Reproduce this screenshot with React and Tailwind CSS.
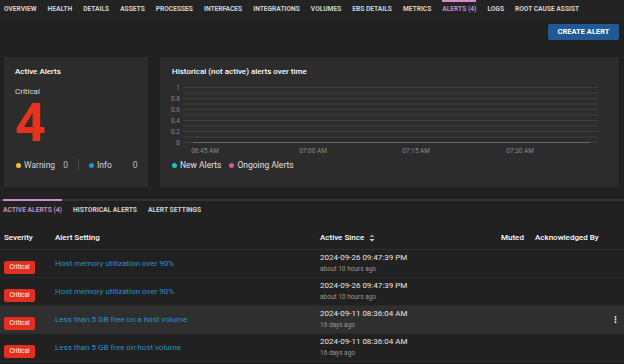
import { MoreVertical } from 'lucide-react';

const navTabs = [
  'OVERVIEW', 'HEALTH', 'DETAILS', 'ASSETS', 'PROCESSES', 'INTERFACES', 'INTEGRATIONS',
  'VOLUMES', 'EBS DETAILS', 'METRICS', 'ALERTS (4)', 'LOGS', 'ROOT CAUSE ASSIST',
];

const alerts = [
  { setting: 'Host memory utilization over 90%', since: '2024-09-26 09:47:39 PM', ago: 'about 10 hours ago' },
  { setting: 'Host memory utilization over 90%', since: '2024-09-26 09:47:39 PM', ago: 'about 10 hours ago' },
  { setting: 'Less than 5 GB free on a host volume', since: '2024-09-11 08:36:04 AM', ago: '16 days ago', hover: true },
  { setting: 'Less than 5 GB free on host volume', since: '2024-09-11 08:36:04 AM', ago: '16 days ago' },
];

function AlertsChart() {
  const lines = Array.from({ length: 11 }, (_, i) => 5.5 + i * 5.5);
  const yLabels = ['1', '0.8', '0.6', '0.4', '0.2', '0'];
  const xLabels = [
    { x: 39, t: '06:45 AM' },
    { x: 147, t: '07:00 AM' },
    { x: 250, t: '07:15 AM' },
    { x: 354, t: '07:30 AM' },
  ];
  return (
    <svg width="440" height="76" className="block">
      {lines.map((y, i) => (
        <line key={i} x1="17" x2="432" y1={y} y2={y} stroke="#3f3f3f" strokeWidth="1" />
      ))}
      <line x1="27" x2="424" y1="60.5" y2="60.5" stroke="#6a6a6a" strokeWidth="1" />
      {yLabels.map((t, i) => (
        <text key={t} x="14" y={i * 11 + 8} fontSize="6.5" fill="#8a8a8a" textAnchor="end">{t}</text>
      ))}
      {xLabels.map((l) => (
        <text key={l.t} x={l.x} y="71" fontSize="6.5" fill="#8a8a8a" textAnchor="middle">{l.t}</text>
      ))}
    </svg>
  );
}

export default function App() {
  return (
    <div className="w-[624px] h-[364px] overflow-hidden bg-[#212121] text-[#e6e6e6] font-['Roboto','Liberation_Sans',sans-serif]">
      {/* Top tabs */}
      <div className="flex h-[18px] px-[4px] gap-[11px] bg-[#232323]">
        {navTabs.map((t) => {
          const active = t === 'ALERTS (4)';
          return (
            <div
              key={t}
              className={`flex items-center border-t-2 text-[6.65px] font-bold whitespace-nowrap ${
                active ? 'border-[#d38ccb] text-[#c48bbf]' : 'border-transparent text-[#d2d2d2]'
              }`}
            >
              {t}
            </div>
          );
        })}
      </div>

      {/* Create button */}
      <div className="flex justify-end pr-[5px] pt-[6px]">
        <button className="h-[16px] w-[71px] rounded-[2px] bg-[#1f5a97] text-[7.5px] font-bold text-white">
          CREATE ALERT
        </button>
      </div>

      {/* Cards */}
      <div className="flex gap-[12px] pl-[4px] pr-[5px] mt-[17px] h-[130px]">
        <div className="w-[144px] bg-[#2c2c2c] pl-[11px] pt-[10px] flex flex-col">
          <div className="text-[8px] font-medium text-white leading-[10px]">Active Alerts</div>
          <div className="text-[8px] text-[#dcdcdc] mt-[10px] leading-[10px]">Critical</div>
          <div className="text-[54px] font-bold text-[#e8321e] leading-[42px] mt-[5px]">4</div>
          <div className="flex items-center mt-[15px] text-[8.5px] text-[#d6d6d6]">
            <span className="w-[5px] h-[5px] rounded-full bg-[#f5c02c] ml-[1px]" />
            <span className="ml-[3px]">Warning</span>
            <span className="ml-[8px] text-[#bdbdbd]">0</span>
            <span className="w-px h-[12px] bg-[#444] ml-[10px]" />
            <span className="w-[5px] h-[5px] rounded-full bg-[#1f95d6] ml-[10px]" />
            <span className="ml-[3px]">Info</span>
            <span className="ml-[21px] text-[#bdbdbd]">0</span>
          </div>
        </div>
        <div className="flex-1 bg-[#2c2c2c] pl-[12px] pt-[10px] flex flex-col">
          <div className="text-[8px] font-medium text-white leading-[10px]">Historical (not active) alerts over time</div>
          <div className="-ml-[6px] mt-[5px]">
            <AlertsChart />
          </div>
          <div className="flex items-center text-[8.5px] text-[#e0e0e0] mt-[1px]">
            <span className="w-[5px] h-[5px] rounded-full bg-[#19c3c0]" />
            <span className="ml-[3px]">New Alerts</span>
            <span className="w-[5px] h-[5px] rounded-full bg-[#cf5b93] ml-[8px]" />
            <span className="ml-[3px]">Ongoing Alerts</span>
          </div>
        </div>
      </div>

      {/* Sub tabs */}
      <div className="mt-[12px] border-t-2 border-[#333] flex px-[3px] gap-[11px] h-[20px]">
        {['ACTIVE ALERTS (4)', 'HISTORICAL ALERTS', 'ALERT SETTINGS'].map((t, i) => (
          <div
            key={t}
            className={`-mt-[2px] flex items-center border-t-2 text-[6.7px] font-bold whitespace-nowrap ${
              i === 0 ? 'border-[#d38ccb] text-[#c48bbf]' : 'border-transparent text-[#d2d2d2]'
            }`}
          >
            {t}
          </div>
        ))}
      </div>

      {/* Table */}
      <div className="mt-[8px]">
        <div className="grid grid-cols-[51px_265px_181px_34px_1fr] pl-[4px] h-[23px] items-center border-b border-[#2e2e2e] text-[8px] font-medium text-white">
          <div>Severity</div>
          <div>Alert Setting</div>
          <div className="flex items-center gap-[5px]">
            Active Since
            <svg width="6" height="8" viewBox="0 0 6 8">
              <path d="M3 0.5 L5.5 3 H0.5 Z" fill="#9a9a9a" />
              <path d="M3 7.5 L5.5 5 H0.5 Z" fill="#d8d8d8" />
            </svg>
          </div>
          <div>Muted</div>
          <div>Acknowledged By</div>
        </div>
        {alerts.map((a, i) => (
          <div
            key={i}
            className={`grid grid-cols-[51px_265px_181px_34px_1fr_12px] pl-[4px] h-[28px] items-center border-b border-[#2a2a2a] ${
              a.hover ? 'bg-[#2f2f2f]' : ''
            }`}
          >
            <div>
              <span className="inline-flex items-center justify-center w-[31px] h-[13px] rounded-[2px] bg-[#e32f1f] text-[6.5px] text-white">
                Critical
              </span>
            </div>
            <div className="text-[8px] text-[#2a90c6]">{a.setting}</div>
            <div className="flex flex-col leading-[10px]">
              <span className="text-[8px] text-[#e6e6e6]">{a.since}</span>
              <span className="text-[6.5px] text-[#9a9a9a] mt-[1px]">{a.ago}</span>
            </div>
            <div />
            <div />
            <div className="flex items-center">
              {a.hover && <MoreVertical className="w-[9px] h-[9px] text-white -ml-[1px]" strokeWidth={3} />}
            </div>
          </div>
        ))}
      </div>
    </div>
  );
}
